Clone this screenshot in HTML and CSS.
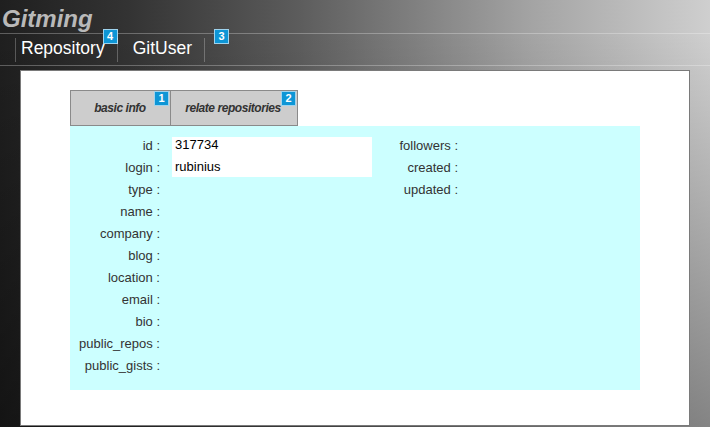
FILE: index.html
```html
<!DOCTYPE html>
<html lang="en">
<head>
<meta charset="utf-8">
<title>Gitming</title>
<link rel="stylesheet" href="styles.css">
</head>
<body>
<header class="top">
  <h1 class="brand">Gitming</h1>
  <nav class="nav">
    <a class="nav-item nav-repo">Repository<span class="hint hint-nav-repo">4</span></a>
    <a class="nav-item nav-user">GitUser<span class="hint hint-nav-user">3</span></a>
  </nav>
</header>
<main class="panel">
  <div class="tabs">
    <div class="tab tab-basic">basic info<span class="hint hint-tab">1</span></div>
    <div class="tab tab-repos">relate repositories<span class="hint hint-tab">2</span></div>
  </div>
  <section class="info">
    <div class="fields fields-main">
      <div class="value-box"></div>
      <div class="label">id :</div>
      <div class="value value-r1">317734</div>
      <div class="label">login :</div>
      <div class="value value-r2">rubinius</div>
      <div class="label">type :</div>
      <div class="label">name :</div>
      <div class="label">company :</div>
      <div class="label">blog :</div>
      <div class="label">location :</div>
      <div class="label">email :</div>
      <div class="label">bio :</div>
      <div class="label">public_repos :</div>
      <div class="label">public_gists :</div>
    </div>
    <div class="fields fields-side">
      <div class="label">followers :</div>
      <div class="label">created :</div>
      <div class="label">updated :</div>
    </div>
  </section>
</main>
</body>
</html>
```
FILE: styles.css
```css
html {
  height: 100%;
}
body {
  margin: 0;
  min-height: 427px;
  overflow: hidden;
  font-family: "Liberation Sans", Arial, sans-serif;
  background:
    linear-gradient(to bottom, rgba(0,0,0,0) 8%, rgba(0,0,0,0.36) 100%),
    linear-gradient(to right, #1f1f1f 0%, #333333 18%, #5c5c5c 42%, #a4a4a4 75%, #cfcfcf 100%);
}
.top {
  display: flex;
  flex-direction: column;
}
.brand {
  margin: 0;
  padding: 4px 0 0 2px;
  height: 29px;
  line-height: 29px;
  font-size: 24px;
  font-weight: bold;
  font-style: italic;
  color: #b9b9b9;
}
.nav {
  display: flex;
  height: 24px;
  padding: 4px 0 3px 15px;
  border-top: 1px solid rgba(255,255,255,0.28);
  border-bottom: 1px solid rgba(255,255,255,0.28);
}
.nav-item {
  position: relative;
  display: block;
  height: 24px;
  line-height: 21px;
  font-size: 17.5px;
  color: #ffffff;
  border-left: 1px solid rgba(255,255,255,0.25);
}
.nav-repo {
  padding: 0 12px 0 5px;
}
.nav-user {
  padding: 0 12px 0 15px;
  border-right: 1px solid rgba(255,255,255,0.25);
}
.hint {
  position: absolute;
  box-sizing: border-box;
  width: 15px;
  height: 15px;
  line-height: 13px;
  text-align: center;
  font-family: "Liberation Sans", Arial, sans-serif;
  font-size: 11px;
  font-weight: bold;
  font-style: normal;
  letter-spacing: 0;
  color: #ffffff;
  background: #0e96d6;
  border: 1px solid #9fd3ee;
}
.hint-nav-repo {
  top: -9px;
  right: -1px;
}
.hint-nav-user {
  top: -9px;
  right: -25px;
}
.panel {
  display: block;
  box-sizing: border-box;
  margin: 4px 20px 0;
  padding: 19px 0 35px 49px;
  background: #ffffff;
  border: 1px solid #7a7a7a;
}
.tabs {
  display: flex;
}
.tab {
  position: relative;
  box-sizing: border-box;
  height: 36px;
  line-height: 34px;
  text-align: center;
  font-size: 12px;
  font-weight: bold;
  font-style: italic;
  letter-spacing: -0.45px;
  color: #333333;
  background: #cdcdcd;
  border: 1px solid #8a8a8a;
}
.tab-basic {
  width: 101px;
  padding-right: 1px;
}
.tab-repos {
  width: 128px;
  margin-left: -1px;
  padding-right: 2px;
}
.hint-tab {
  top: 0;
  right: 1px;
}
.info {
  display: flex;
  align-items: flex-start;
  width: 570px;
  padding: 9px 0 13px;
  background: #ccffff;
}
.fields {
  display: grid;
  grid-auto-rows: 22px;
  column-gap: 12px;
  font-size: 13px;
  line-height: 22px;
}
.fields-main {
  grid-template-columns: 90px 200px;
}
.fields-side {
  grid-template-columns: 86px 100px;
}
.label {
  grid-column: 1;
  text-align: right;
  color: #333333;
}
.value-box {
  grid-column: 2;
  grid-row: 1 / 3;
  margin: 2px 0 2px;
  background: #ffffff;
}
.value {
  grid-column: 2;
  padding-left: 3px;
  color: #000000;
  line-height: 20px;
}
.value-r1 {
  grid-row: 1;
}
.value-r2 {
  grid-row: 2;
}
```
